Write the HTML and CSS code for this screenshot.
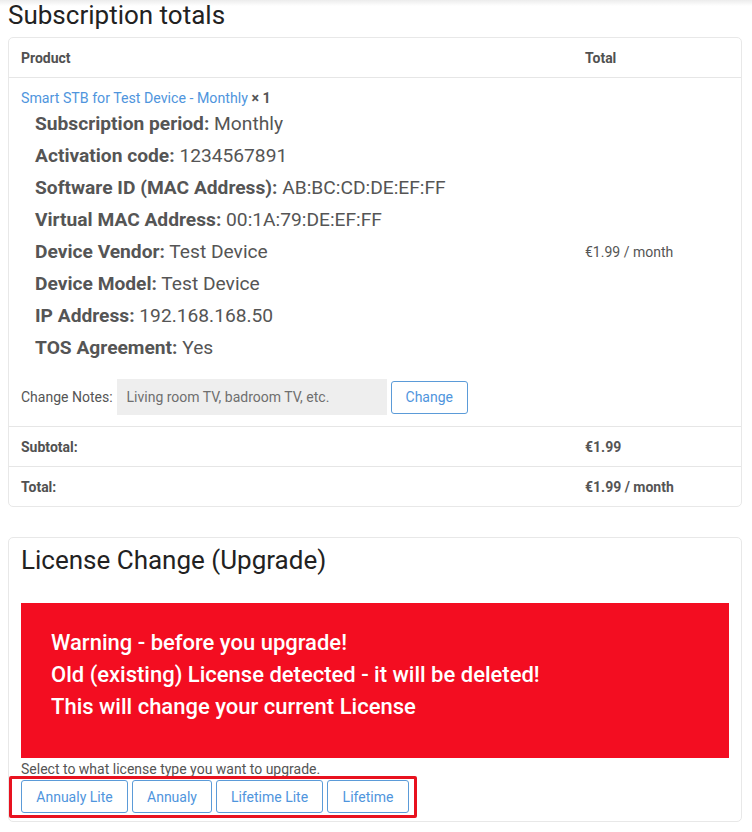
FILE: index.html
```html
<!DOCTYPE html>
<html lang="en">
<head>
<meta charset="utf-8">
<title>Subscription totals</title>
<link rel="stylesheet" href="styles.css">
</head>
<body>
<div class="topshade"></div>
<div class="page">
  <h2 class="title">Subscription totals</h2>
  <div class="card">
    <table class="totals">
      <thead>
        <tr><th class="col-product">Product</th><th class="col-total">Total</th></tr>
      </thead>
      <tbody>
        <tr>
          <td class="product-cell">
            <div class="product-line"><a class="product-link" href="#">Smart STB for Test Device - Monthly</a> <strong class="qty">× 1</strong></div>
            <ul class="meta">
              <li><strong>Subscription period:</strong> Monthly</li>
              <li><strong>Activation code:</strong> 1234567891</li>
              <li><strong>Software ID (MAC Address):</strong> AB:BC:CD:DE:EF:FF</li>
              <li><strong>Virtual MAC Address:</strong> 00:1A:79:DE:EF:FF</li>
              <li><strong>Device Vendor:</strong> Test Device</li>
              <li><strong>Device Model:</strong> Test Device</li>
              <li><strong>IP Address:</strong> 192.168.168.50</li>
              <li><strong>TOS Agreement:</strong> Yes</li>
            </ul>
            <div class="notes">
              <label class="notes-label">Change Notes:</label>
              <input class="notes-input" type="text" placeholder="Living room TV, badroom TV, etc.">
              <button class="btn">Change</button>
            </div>
          </td>
          <td class="total-cell">€1.99 / month</td>
        </tr>
      </tbody>
      <tfoot>
        <tr><th>Subtotal:</th><td class="foot-val">€1.99</td></tr>
        <tr><th>Total:</th><td class="foot-val">€1.99 / month</td></tr>
      </tfoot>
    </table>
  </div>

  <div class="card license">
    <h2 class="license-title">License Change (Upgrade)</h2>
    <div class="warning">
      <p>Warning - before you upgrade!</p>
      <p>Old (existing) License detected - it will be deleted!</p>
      <p>This will change your current License</p>
    </div>
    <p class="select-text">Select to what license type you want to upgrade.</p>
    <div class="options">
      <button class="btn">Annualy Lite</button>
      <button class="btn">Annualy</button>
      <button class="btn">Lifetime Lite</button>
      <button class="btn">Lifetime</button>
    </div>
  </div>
</div>
</body>
</html>
```

FILE: styles.css
```css
html, body {
  margin: 0;
  padding: 0;
  background: #fff;
}
body {
  font-family: Roboto, "Liberation Sans", Arial, sans-serif;
  color: #555;
  position: relative;
}
.topshade {
  position: absolute;
  left: 0;
  right: 0;
  top: 0;
  height: 6px;
  background: linear-gradient(to bottom, #ececec, rgba(255,255,255,0));
}
.page {
  padding: 0 10px 20px 8px;
}
.title {
  margin: 0 0 7px;
  font-size: 26px;
  line-height: 30px;
  font-weight: 400;
  color: #222;
  position: relative;
}
.card {
  border: 1px solid #e8e8e8;
  border-radius: 5px;
  background: #fff;
}
.totals {
  width: 100%;
  border-collapse: collapse;
  font-size: 14px;
}
.totals th {
  text-align: left;
  font-weight: 700;
  color: #515151;
  padding: 0 12px;
  height: 39px;
}
.totals thead th {
  height: 39px;
  border-bottom: 1px solid #e6e6e6;
}
.col-total {
  width: 144px;
}
.product-cell {
  padding: 10px 12px 11px;
  vertical-align: top;
}
.product-line {
  line-height: 20px;
  font-size: 14.2px;
}
.product-link {
  color: #4f95dd;
  text-decoration: none;
}
.qty {
  color: #555;
}
.meta {
  list-style: none;
  margin: 0;
  padding: 0 0 0 14px;
  font-size: 19.2px;
  line-height: 32px;
  color: #555;
}
.meta strong {
  font-weight: 700;
}
.notes {
  display: flex;
  align-items: center;
  gap: 4px;
  margin-top: 15px;
}
.notes-label {
  color: #555;
}
.notes-input {
  width: 270px;
  height: 36px;
  box-sizing: border-box;
  border: none;
  background: #eeeeee;
  padding: 0 10px;
  font-family: inherit;
  font-size: 14px;
  color: #555;
}
.notes-input::placeholder {
  color: #6f6f6f;
}
.btn {
  height: 33px;
  box-sizing: border-box;
  padding: 0 14px;
  border: 1px solid #5b9bd8;
  border-radius: 3px;
  background: #fff;
  color: #4f95dd;
  font-family: inherit;
  font-size: 14px;
  white-space: nowrap;
  cursor: pointer;
}
.total-cell {
  padding: 0 12px;
  vertical-align: middle;
  color: #555;
}
.totals tfoot th,
.totals tfoot td {
  border-top: 1px solid #e6e6e6;
  height: 39px;
}
.foot-val {
  padding: 0 12px;
  font-weight: 700;
  color: #555;
}
.license {
  margin-top: 30px;
  padding: 7px 12px 8px;
}
.license-title {
  margin: 0;
  font-size: 26px;
  line-height: 30px;
  font-weight: 400;
  color: #222;
}
.warning {
  margin-top: 28px;
  background: #f30d21;
  color: #fff;
  padding: 24px 30px 35px;
  font-size: 22px;
  line-height: 32px;
  font-weight: 500;
}
.warning p {
  margin: 0;
}
.select-text {
  margin: 2px 0 0;
  font-size: 14px;
  line-height: 18px;
  color: #555;
}
.options {
  position: relative;
  display: flex;
  gap: 4px;
  margin-top: 2px;
}
.options::after {
  content: "";
  position: absolute;
  left: -12px;
  top: -4px;
  right: 312px;
  bottom: -5px;
  border: 3px solid #e8121f;
  border-radius: 2px;
  pointer-events: none;
}
.options .btn {
  padding: 0;
}
.options .btn:nth-child(1) { width: 107px; }
.options .btn:nth-child(2) { width: 80px; }
.options .btn:nth-child(3) { width: 107px; }
.options .btn:nth-child(4) { width: 82px; }
```
